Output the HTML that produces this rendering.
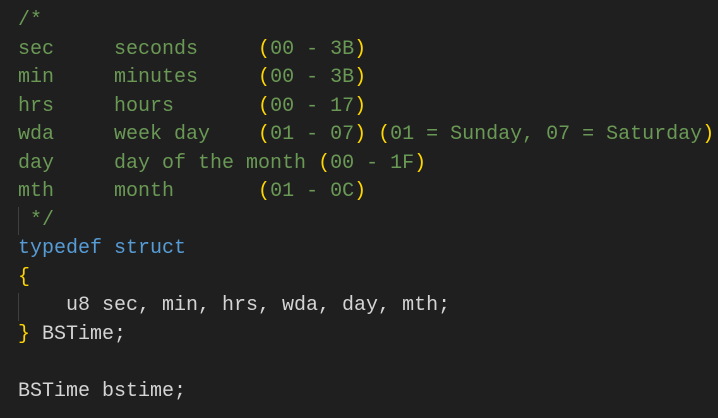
<!DOCTYPE html>
<html><head><style>
html,body{margin:0;padding:0;background:#1f1f1f;width:718px;height:418px;overflow:hidden}
pre{margin:0;padding:7px 0 0 18px;font-family:"Liberation Mono",monospace;font-size:20px;line-height:28.5px;color:#d4d4d4;position:relative}
.c{color:#6a9955}.p{color:#ffd700}.k{color:#569cd6}
.g{position:absolute;left:18px;width:1px;background:#404040;height:28px}
</style></head><body>
<pre><div class="g" style="top:207px"></div><div class="g" style="top:293px"></div><span class="c">/*
sec     seconds     <span class="p">(</span>00 - 3B<span class="p">)</span>
min     minutes     <span class="p">(</span>00 - 3B<span class="p">)</span>
hrs     hours       <span class="p">(</span>00 - 17<span class="p">)</span>
wda     week day    <span class="p">(</span>01 - 07<span class="p">)</span> <span class="p">(</span>01 = Sunday, 07 = Saturday<span class="p">)</span>
day     day of the month <span class="p">(</span>00 - 1F<span class="p">)</span>
mth     month       <span class="p">(</span>01 - 0C<span class="p">)</span>
 */</span>
<span class="k">typedef</span> <span class="k">struct</span>
<span class="p">{</span>
    u8 sec, min, hrs, wda, day, mth;
<span class="p">}</span> BSTime;

BSTime bstime;</pre>
</body></html>
